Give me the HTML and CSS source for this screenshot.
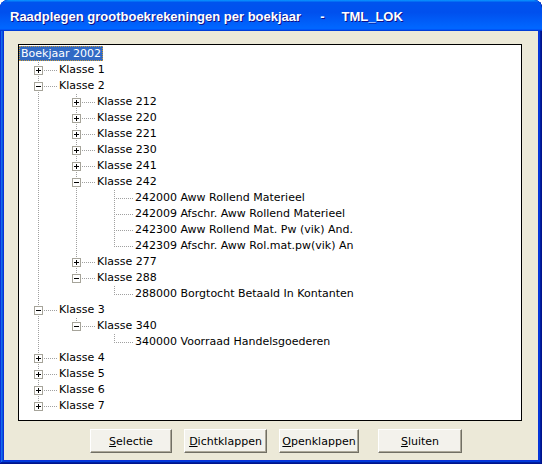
FILE: index.html
```html
<!DOCTYPE html>
<html>
<head>
<meta charset="utf-8">
<link rel="stylesheet" href="styles.css">
</head>
<body>
<div class="window">
  <div class="titlebar"><span class="title">Raadplegen grootboekrekeningen per boekjaar</span><span class="title sep">-</span><span class="title app">TML_LOK</span></div>
  <div class="client">
    <div class="tree">
      <div class="row"><span class="label selected">Boekjaar 2002</span></div>
      <div class="row"><span class="cell tee"><span class="box plus"></span></span><span class="label">Klasse 1</span></div>
      <div class="row"><span class="cell tee"><span class="box minus"></span></span><span class="label">Klasse 2</span></div>
      <div class="row"><span class="cell pipe"></span><span class="cell tee"><span class="box plus"></span></span><span class="label">Klasse 212</span></div>
      <div class="row"><span class="cell pipe"></span><span class="cell tee"><span class="box plus"></span></span><span class="label">Klasse 220</span></div>
      <div class="row"><span class="cell pipe"></span><span class="cell tee"><span class="box plus"></span></span><span class="label">Klasse 221</span></div>
      <div class="row"><span class="cell pipe"></span><span class="cell tee"><span class="box plus"></span></span><span class="label">Klasse 230</span></div>
      <div class="row"><span class="cell pipe"></span><span class="cell tee"><span class="box plus"></span></span><span class="label">Klasse 241</span></div>
      <div class="row"><span class="cell pipe"></span><span class="cell tee"><span class="box minus"></span></span><span class="label">Klasse 242</span></div>
      <div class="row"><span class="cell pipe"></span><span class="cell pipe"></span><span class="cell tee"></span><span class="label">242000 Aww Rollend Materieel</span></div>
      <div class="row"><span class="cell pipe"></span><span class="cell pipe"></span><span class="cell tee"></span><span class="label">242009 Afschr. Aww Rollend Materieel</span></div>
      <div class="row"><span class="cell pipe"></span><span class="cell pipe"></span><span class="cell tee"></span><span class="label">242300 Aww Rollend Mat. Pw (vik) And.</span></div>
      <div class="row"><span class="cell pipe"></span><span class="cell pipe"></span><span class="cell elbow"></span><span class="label">242309 Afschr. Aww Rol.mat.pw(vik) An</span></div>
      <div class="row"><span class="cell pipe"></span><span class="cell tee"><span class="box plus"></span></span><span class="label">Klasse 277</span></div>
      <div class="row"><span class="cell pipe"></span><span class="cell elbow"><span class="box minus"></span></span><span class="label">Klasse 288</span></div>
      <div class="row"><span class="cell pipe"></span><span class="cell blank"></span><span class="cell elbow"></span><span class="label">288000 Borgtocht Betaald In Kontanten</span></div>
      <div class="row"><span class="cell tee"><span class="box minus"></span></span><span class="label">Klasse 3</span></div>
      <div class="row"><span class="cell pipe"></span><span class="cell elbow"><span class="box minus"></span></span><span class="label">Klasse 340</span></div>
      <div class="row"><span class="cell pipe"></span><span class="cell blank"></span><span class="cell elbow"></span><span class="label">340000 Voorraad Handelsgoederen</span></div>
      <div class="row"><span class="cell tee"><span class="box plus"></span></span><span class="label">Klasse 4</span></div>
      <div class="row"><span class="cell tee"><span class="box plus"></span></span><span class="label">Klasse 5</span></div>
      <div class="row"><span class="cell tee"><span class="box plus"></span></span><span class="label">Klasse 6</span></div>
      <div class="row"><span class="cell elbow"><span class="box plus"></span></span><span class="label">Klasse 7</span></div>
    </div>
    <div class="buttons">
      <button class="btn btn-selectie"><u>S</u>electie</button>
      <button class="btn btn-dicht"><u>D</u>ichtklappen</button>
      <button class="btn btn-open"><u>O</u>penklappen</button>
      <button class="btn btn-sluiten"><u>S</u>luiten</button>
    </div>
  </div>
</div>
</body>
</html>
```

FILE: styles.css
```css
html, body {
  margin: 0;
  padding: 0;
  background: #ffffff;
}

.window {
  width: 542px;
  height: 464px;
  box-sizing: border-box;
  display: flex;
  flex-direction: column;
  background: #0831d9;
  border-radius: 8px 8px 0 0;
  box-shadow: inset -1px -1px #00138c, inset 1px 1px #0831d9, inset -2px -2px #001ea0, inset 2px 2px #166aee, inset -3px -3px #003bda, inset 3px 3px #0855dd;
  padding: 0 4px 4px 4px;
  overflow: hidden;
}

.titlebar {
  height: 31px;
  margin: 0 -4px;
  flex: none;
  display: flex;
  align-items: center;
  padding-left: 10px;
  border-radius: 8px 8px 0 0;
  background: linear-gradient(180deg, #0997ff, #0053ee 8%, #0050ee 40%, #06f 88%, #06f 93%, #005bff 95%, #003dd7 96%, #003dd7);
}

.title {
  font-family: "Liberation Sans", "DejaVu Sans", sans-serif;
  font-weight: bold;
  font-size: 13px;
  color: #ffffff;
  white-space: pre;
  text-shadow: 1px 1px #0f1089;
  padding-top: 2px;
}

.sep {
  margin-left: 19px;
}

.app {
  margin-left: 17px;
}

.client {
  flex: 1;
  background: #ece9d8;
  display: flex;
  flex-direction: column;
  padding: 13px 16px 0 14px;
}

.tree {
  height: 374px;
  border: 1px solid #000000;
  background: #ffffff;
  padding-top: 1px;
  font-family: "DejaVu Sans", "Liberation Sans", sans-serif;
  font-size: 11px;
  color: #000000;
}

.row {
  height: 16px;
  display: flex;
  align-items: stretch;
}

.cell {
  width: 38px;
  flex: none;
  display: flex;
  align-items: flex-start;
}

.pipe {
  background: repeating-linear-gradient(to bottom, #a0a0a0 0 1px, transparent 1px 2px) 19px 0 / 1px 16px no-repeat;
}

.tee {
  background:
    repeating-linear-gradient(to bottom, #a0a0a0 0 1px, transparent 1px 2px) 19px 0 / 1px 16px no-repeat,
    repeating-linear-gradient(to right, #a0a0a0 0 1px, transparent 1px 2px) 21px 8px / 17px 1px no-repeat;
}

.elbow {
  background:
    repeating-linear-gradient(to bottom, #a0a0a0 0 1px, transparent 1px 2px) 19px 0 / 1px 9px no-repeat,
    repeating-linear-gradient(to right, #a0a0a0 0 1px, transparent 1px 2px) 21px 8px / 17px 1px no-repeat;
}

.box {
  width: 9px;
  height: 9px;
  box-sizing: border-box;
  margin: 4px 0 0 15px;
  border: 1px solid #a6a49a;
  background-color: #ffffff;
}

.minus {
  background: #ffffff linear-gradient(#000, #000) 1px 3px / 5px 1px no-repeat;
}

.plus {
  background:
    linear-gradient(#000, #000) 1px 3px / 5px 1px no-repeat,
    linear-gradient(#000, #000) 3px 1px / 1px 5px no-repeat,
    #ffffff;
}

.label {
  padding: 0 2px;
  line-height: 15px;
  height: 15px;
  white-space: pre;
}

.selected {
  background: #316ac5;
  color: #ffffff;
  outline: 1px dotted #c89a3a;
  outline-offset: -1px;
}

.buttons {
  display: flex;
  padding-left: 72px;
  margin-top: 8px;
}

.btn {
  height: 24px;
  box-sizing: border-box;
  margin: 0;
  padding: 0;
  font-family: "DejaVu Sans", "Liberation Sans", sans-serif;
  font-size: 11px;
  color: #000000;
  background: #f3f2ec;
  border: 1px solid;
  border-color: #ffffff #716f64 #716f64 #ffffff;
  box-shadow: inset -1px -1px #aca899;
  border-radius: 0;
}

.btn-selectie { width: 82px; }
.btn-dicht { width: 83px; margin-left: 12px; }
.btn-open { width: 80px; margin-left: 12px; }
.btn-sluiten { width: 84px; margin-left: 19px; }
```
